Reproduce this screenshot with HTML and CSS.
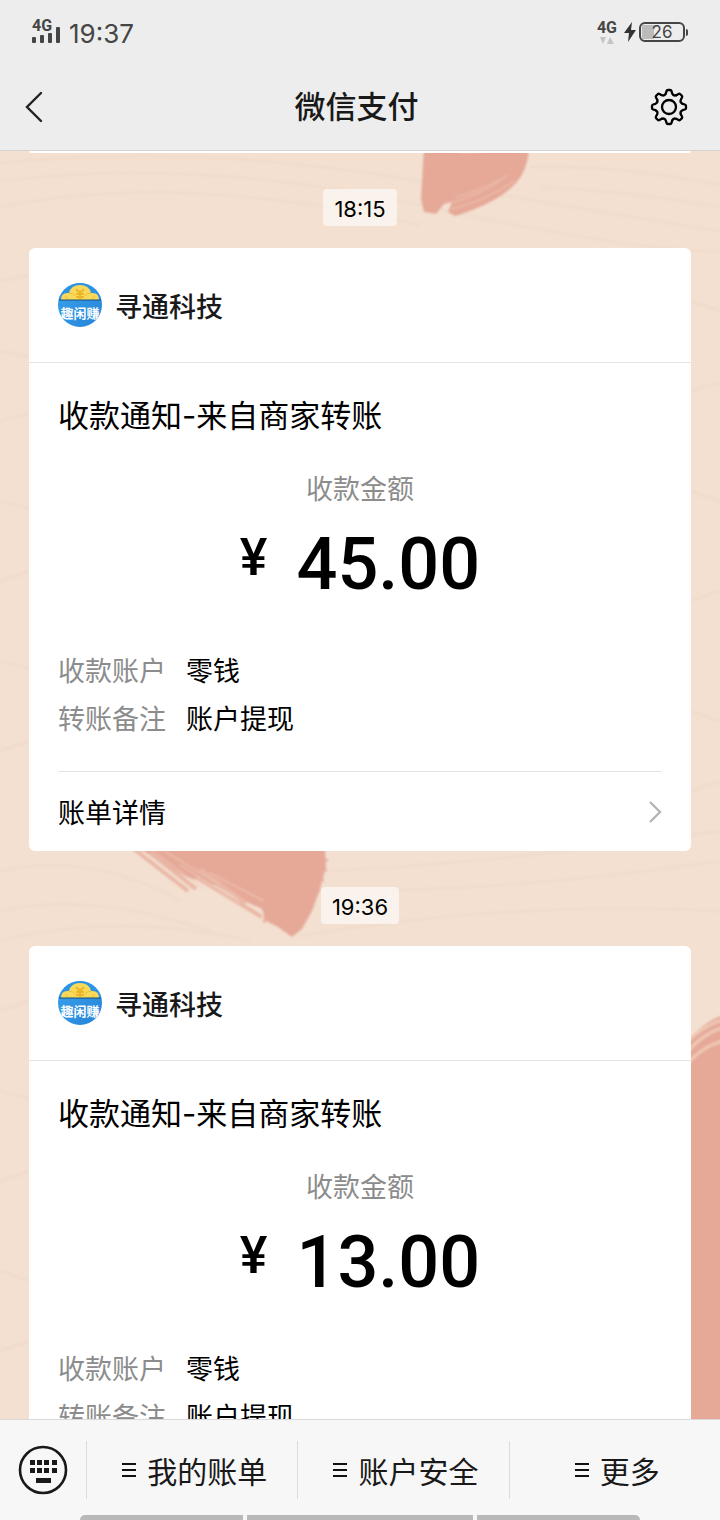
FILE: index.html
```html
<!DOCTYPE html>
<html lang="zh-CN">
<head>
<meta charset="utf-8">
<meta name="viewport" content="width=device-width, initial-scale=1">
<title>微信支付</title>
<link rel="stylesheet" href="styles.css">
</head>
<body>
<svg class="defs" aria-hidden="true">
  <defs>
    <clipPath id="logo-clip"><circle cx="22" cy="22" r="22"/></clipPath>
    <linearGradient id="logo-blue" x1="0" y1="0" x2="1" y2="1"><stop offset="0" stop-color="#3aa3ec"/><stop offset="1" stop-color="#2583d8"/></linearGradient>
    <symbol id="logo" viewBox="0 0 44 44">
      <g clip-path="url(#logo-clip)">
        <rect width="44" height="44" fill="url(#logo-blue)"/>
        <path d="M0 17H44V0H0Z" fill="#2f93e4"/>
        <path d="M3 17Q3 9 11 10Q13 2 22 2Q31 2 33 10Q41 9 41 17Z" fill="#f8d95a"/>
        <path d="M11 10Q15 10 17 13M33 10Q29 10 27 13M7 13l3 3M37 13l-3 3" fill="none" stroke="#eebc2f" stroke-width="1"/>
        <path d="M18 6L22 10L26 6M22 10V16M18 11H26M18 14H26" fill="none" stroke="#ecb52a" stroke-width="2"/>
        <path d="M1 17H43" stroke="#174e78" stroke-width="1"/>
        <text class="logo-text" x="22" y="35" text-anchor="middle">趣闲赚</text>
      </g>
    </symbol>
    <symbol id="lines" viewBox="0 0 14 14"><path d="M0 1H14M0 7H14M0 13H14" stroke="#111" stroke-width="2"/></symbol>
  </defs>
</svg>
<div class="screen">
  <div class="status">
    <div class="status-side">
      <div class="signal">
        <span class="net">4G</span>
        <svg width="28" height="16" viewBox="0 0 28 16" fill="#454545"><rect y="10" width="4" height="6" rx="1"/><rect x="8" y="8" width="4" height="8" rx="1"/><rect x="16" y="6" width="4" height="10" rx="1"/><rect x="24" width="4" height="16" rx="1"/></svg>
      </div>
      <span class="clock">19:37</span>
    </div>
    <div class="status-side">
      <div class="data">
        <span class="net">4G</span>
        <svg width="14" height="7" viewBox="0 0 14 7" fill="#c4c4c4"><path d="M0 0H6L3 7ZM7 7H14L10 0Z"/></svg>
      </div>
      <svg class="bolt" width="12" height="20" viewBox="0 0 12 20"><path d="M8 0L0 11H5L4 20L12 8H7Z" fill="#333"/></svg>
      <div class="battery"><span>26</span></div>
    </div>
  </div>
  <header class="bar">
    <button class="icon-btn" aria-label="返回"><svg width="18" height="32" viewBox="0 0 18 32"><path d="M16 2L2 16L16 30" fill="none" stroke="#222" stroke-width="2.4" stroke-linecap="round"/></svg></button>
    <h1>微信支付</h1>
    <button class="icon-btn" aria-label="设置">
      <svg width="38" height="38" viewBox="-19 -19 38 38" fill="none" stroke="#000" stroke-width="2.3" stroke-linecap="round" stroke-linejoin="round">
        <defs><path id="tooth" d="M-3.2-13.5L-2.5-15.9Q-2.2-17-1-17H1Q2.2-17 2.5-15.9L3.2-13.5Q4.4-10.7 7.3-11.8"/></defs>
        <circle r="7"/>
        <use href="#tooth"/><use href="#tooth" transform="rotate(45)"/><use href="#tooth" transform="rotate(90)"/><use href="#tooth" transform="rotate(135)"/><use href="#tooth" transform="rotate(180)"/><use href="#tooth" transform="rotate(225)"/><use href="#tooth" transform="rotate(270)"/><use href="#tooth" transform="rotate(315)"/>
      </svg>
    </button>
  </header>

  <main class="chat">
    <svg class="wallpaper" viewBox="0 0 720 1268" preserveAspectRatio="xMidYMin slice" aria-hidden="true">
      <defs><filter id="soft" x="-10%" y="-10%" width="120%" height="120%"><feGaussianBlur stdDeviation="1"/></filter></defs>
      <g fill="none" stroke="#ecd5c3" stroke-width="3" opacity=".35" filter="url(#soft)">
        <path d="M0 12Q200 -8 420 30T720 80M0 30Q200 6 420 54T720 100M0 56Q180 20 420 74M530 16Q620 14 720 34M540 36Q630 40 720 56"/>
        <path d="M0 720Q90 700 180 750M0 760Q90 740 210 780M330 720Q520 710 720 680M330 740Q520 740 720 710M300 785Q500 750 720 760M0 790Q120 760 250 790"/>
        <path d="M0 130L30 124M0 200L30 206M0 270L30 262M0 350L30 358M0 430L30 420M0 510L30 518M0 600L30 590M0 860L30 850M0 940L30 948M0 1030L30 1020M0 1120L30 1130M0 1200L30 1190M690 150L720 160M690 240L720 232M690 340L720 350M690 450L720 440M690 560L720 570M690 640L720 630"/>
      </g>
      <g filter="url(#soft)">
        <path d="M424 -4H529Q528 22 512 36Q494 53 455 65L448 61L452 51L444 53L436 63L424 61L421 48Z" fill="#e6a998"/>
        <path d="M450 52Q482 44 508 24M452 58Q485 50 514 30M456 46Q480 40 500 28M462 2Q490 -2 520 -2" fill="none" stroke="#efc5b4" stroke-width="1"/>
        <path d="M140 698H325L326 716L320 738L312 760L302 778L292 786L278 776L266 770L262 758L240 748L215 734L186 726Z" fill="#e6a998"/>
        <path d="M134 698L188 740M150 702L196 738M196 726L262 766M200 718L246 752" fill="none" stroke="#eab7a6" stroke-width="4"/>
        <path d="M150 698L204 738M180 714L240 752M210 722L264 750M164 700L220 734" fill="none" stroke="#f0cdbc" stroke-width="1"/>
        <path d="M322 706l6 4M321 716l6 4M318 726l6 4M314 736l6 4M309 746l6 4M304 756l6 4M298 766l5 6M290 772l5 8M280 768l4 12M266 760l-2 12" stroke="#e6a998" stroke-width="2"/>
        <path d="M688 890Q704 870 724 864V1272H688Z" fill="#e6a998"/>
        <path d="M688 890Q704 874 724 868M688 900Q704 882 724 876M688 912Q704 894 724 890" fill="none" stroke="#efcab7" stroke-width="3"/>
      </g>
    </svg>

    <div class="thread">
      <div class="card-end"></div>
      <time class="stamp">18:15</time>
      <article class="card">
        <header class="card-head"><svg class="logo"><use href="#logo"/></svg><strong>寻通科技</strong></header>
        <div class="card-body">
          <h2>收款通知-来自商家转账</h2>
          <p class="label">收款金额</p>
          <p class="amount"><span class="yen">¥</span><span>45.00</span></p>
          <dl><dt>收款账户</dt><dd>零钱</dd><dt>转账备注</dt><dd>账户提现</dd></dl>
          <a class="detail" href="#">账单详情<svg width="14" height="24" viewBox="0 0 14 24"><path d="M2 2L12 12L2 22" fill="none" stroke="#b2b2b2" stroke-width="2.2"/></svg></a>
        </div>
      </article>
      <time class="stamp">19:36</time>
      <article class="card">
        <header class="card-head"><svg class="logo"><use href="#logo"/></svg><strong>寻通科技</strong></header>
        <div class="card-body">
          <h2>收款通知-来自商家转账</h2>
          <p class="label">收款金额</p>
          <p class="amount"><span class="yen">¥</span><span>13.00</span></p>
          <dl><dt>收款账户</dt><dd>零钱</dd><dt>转账备注</dt><dd>账户提现</dd></dl>
        </div>
      </article>
    </div>
  </main>

  <footer class="menu">
    <button class="keyboard" aria-label="键盘">
      <svg width="50" height="50" viewBox="0 0 50 50"><circle cx="25" cy="25" r="23" fill="none" stroke="#191919" stroke-width="2.6"/><path d="M12 15h5v5h-5zM19 15h5v5h-5zM26 15h5v5h-5zM34 15h5v5h-5zM12 23h5v5h-5zM19 23h5v5h-5zM26 23h5v5h-5zM34 23h5v5h-5zM18 33h15v5H18z" fill="#191919"/></svg>
    </button>
    <button class="menu-item"><svg class="lines"><use href="#lines"/></svg>我的账单</button>
    <button class="menu-item"><svg class="lines"><use href="#lines"/></svg>账户安全</button>
    <button class="menu-item"><svg class="lines"><use href="#lines"/></svg>更多</button>
    <div class="gesture"><i></i><i></i><i></i></div>
  </footer>
</div>
</body>
</html>
```
FILE: styles.css
```css
* { box-sizing: border-box; }
body, h1, h2, p, dl, dd { margin: 0; }
body { font-family: Inter, "Noto Sans CJK SC", sans-serif; color: #000; }
button { border: 0; padding: 0; background: none; font: inherit; color: inherit; }
svg { display: block; flex: none; }
.defs { position: absolute; width: 0; height: 0; }
.logo-text { font: 700 13px "Noto Sans CJK SC", sans-serif; fill: #fff; }

.screen { display: flex; flex-direction: column; height: 100vh; background: #ededed; }
.status { display: flex; justify-content: space-between; height: 64px; padding: 0 35px 0 32px; color: #454545; }
.status-side { display: flex; align-items: center; }
.signal { display: flex; flex-direction: column; margin-right: 9px; padding-bottom: 4px; }
.net { font: 700 16px/15px Roboto, sans-serif; }
.signal .net { margin-bottom: -6px; }
.clock { font-size: 26px; line-height: 32px; padding-top: 4px; }
.data { display: flex; flex-direction: column; align-items: center; gap: 2px; margin-right: 7px; }
.bolt { margin-right: 3px; }
.battery { position: relative; width: 46px; height: 20px; border: 2px solid #454545; border-radius: 6px; background: linear-gradient(#bbb, #bbb) 1px 1px / 12px 14px no-repeat; text-align: center; font-size: 17px; line-height: 16px; }
.battery::after { content: ""; position: absolute; right: -5px; top: 5px; width: 2px; height: 7px; border-radius: 0 2px 2px 0; background: #454545; }

.bar { display: flex; align-items: center; justify-content: space-between; height: 87px; padding: 0 32px 0 25px; border-bottom: 1px solid #d5d3d2; }
.bar h1 { font-size: 31px; line-height: 40px; font-weight: 500; color: #191919; }
.icon-btn { display: flex; align-items: center; width: 38px; height: 44px; }

.chat { position: relative; flex: 1; min-height: 0; overflow: hidden; background: #f3e0d1; }
.wallpaper { position: absolute; inset: 0; width: 100%; height: 100%; }
.thread { position: relative; display: flex; flex-direction: column; padding: 0 29px; }
.card-end { height: 2px; border-radius: 0 0 6px 6px; background: #fff; }
.stamp { align-self: center; margin: 36px 0 22px; padding: 3px 11px 0; border-radius: 4px; background: rgba(255, 255, 255, .6); font-size: 22px; line-height: 34px; }
.card { border-radius: 6px; background: #fff; }
.card-head { display: flex; align-items: center; gap: 13px; height: 115px; padding: 0 29px; border-bottom: 1px solid #e4e4e4; font-size: 27px; line-height: 40px; color: #191919; }
.card-head strong { padding-top: 6px; font-weight: 500; }
.logo { width: 44px; height: 44px; }
.card-body { padding: 30px 29px 0; }
h2 { font-size: 31px; line-height: 46px; font-weight: 400; }
.label { margin-top: 32px; text-align: center; font-size: 27px; line-height: 38px; color: #8c8c8c; }
.amount { display: flex; justify-content: center; gap: 29px; margin-top: 16px; font: 500 72px/80px Roboto, sans-serif; }
.yen { font-size: 52px; line-height: 66px; }
dl { display: grid; grid-template-columns: 108px 1fr; column-gap: 20px; margin-top: 43px; padding-bottom: 27px; font-size: 27px; line-height: 48px; }
dt { color: #8c8c8c; }
.detail { display: flex; align-items: center; justify-content: space-between; height: 80px; border-top: 1px solid #e4e4e4; font-size: 27px; color: #000; text-decoration: none; }

.menu { position: relative; display: flex; align-items: center; height: 101px; border-top: 1px solid #d9d9d9; background: #f7f7f7; color: #191919; }
.keyboard { display: flex; justify-content: center; width: 86px; }
.menu-item { flex: 1; display: flex; align-items: center; justify-content: center; gap: 11px; height: 58px; padding-left: 5px; border-left: 1px solid #dcdcdc; font-size: 30px; }
.lines { width: 14px; height: 14px; }
.gesture { position: absolute; left: 80px; right: 80px; bottom: 0; display: flex; gap: 4px; height: 5px; border-radius: 5px 5px 0 0; overflow: hidden; }
.gesture i { flex: 163; background: #b9b9b9; }
.gesture i:nth-child(2) { flex: 226; }
```
